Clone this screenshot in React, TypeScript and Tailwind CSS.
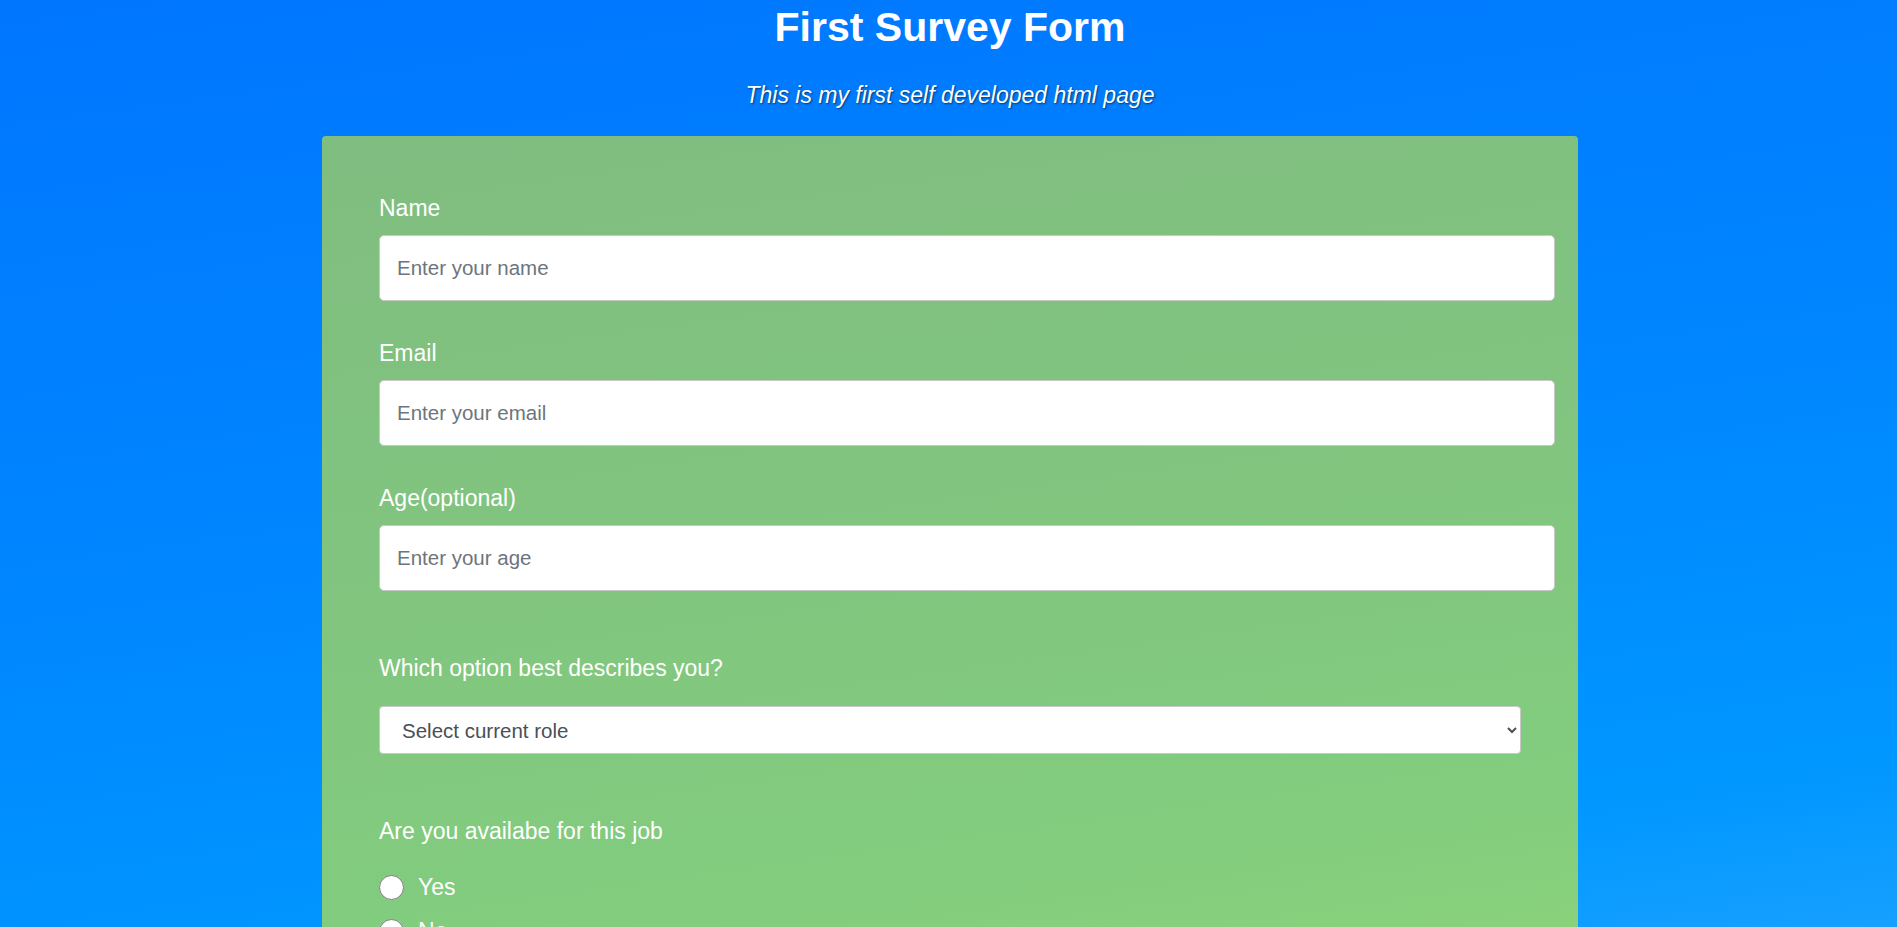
export default function App() {
  return (
    <div className="min-h-screen w-full bg-[linear-gradient(172deg,#0076ff_0%,#0086ff_45%,#0097ff_78%,#25a6ff_100%)] pb-10 pl-[3px] font-['Liberation_Sans',Arial,sans-serif] text-white">
      <h1 className="pt-[3px] text-center text-[41px] leading-[48px] font-bold">First Survey Form</h1>
      <p className="mt-[31px] text-center text-[23px] leading-[26px] italic [text-shadow:1px_1px_2px_rgba(0,0,0,0.55)]">
        This is my first self developed html page
      </p>

      <form className="mx-auto mt-[28px] w-[1256px] rounded-[4px] bg-[linear-gradient(172deg,#80bd80_0%,#81c57f_45%,#82cd7e_80%,#8ed47a_100%)] pt-[59px] pr-[24px] pb-[60px] pl-[57px]">
        <Field label="Name" placeholder="Enter your name" type="text" />
        <Field label="Email" placeholder="Enter your email" type="email" />
        <Field label="Age(optional)" placeholder="Enter your age" type="number" last />

        <div className="mt-[64px]">
          <label className="block text-[23px] leading-[26px]">Which option best describes you?</label>
          <select
            defaultValue=""
            className="mt-[25px] h-[48px] w-[1142px] rounded-[4px] border border-[#c8c8c8] bg-white pr-[10px] pl-[18px] text-[20.5px] text-[#495057]"
          >
            <option value="" disabled>
              Select current role
            </option>
            <option>Student</option>
            <option>Full Time Job</option>
            <option>Full Time Learner</option>
            <option>Prefer not to say</option>
            <option>Other</option>
          </select>
        </div>

        <div className="mt-[64px]">
          <p className="text-[23px] leading-[26px]">Are you availabe for this job</p>
          <div className="mt-[30px] flex flex-col gap-[18px]">
            <Radio label="Yes" />
            <Radio label="No" />
          </div>
        </div>
      </form>
    </div>
  );
}

function Field({
  label,
  placeholder,
  type,
  last,
}: {
  label: string;
  placeholder: string;
  type: string;
  last?: boolean;
}) {
  return (
    <div className={last ? "" : "mb-[39px]"}>
      <label className="block text-[23px] leading-[26px]">{label}</label>
      <input
        type={type}
        placeholder={placeholder}
        className="mt-[14px] h-[66px] w-[1176px] rounded-[5px] border border-[#c8c8c8] bg-white px-[17px] text-[20.5px] text-[#495057] placeholder:text-[#6c757d] outline-none"
      />
    </div>
  );
}

function Radio({ label }: { label: string }) {
  return (
    <label className="flex items-center gap-[14px] text-[23px] leading-[26px]">
      <input type="radio" name="available" className="m-0 h-[25px] w-[25px]" />
      {label}
    </label>
  );
}
